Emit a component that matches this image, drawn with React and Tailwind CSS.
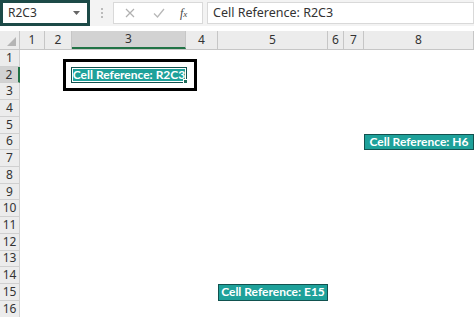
import React from "react";

const cols = [
  { n: "1", w: 25 },
  { n: "2", w: 27 },
  { n: "3", w: 114, sel: true },
  { n: "4", w: 32 },
  { n: "5", w: 110 },
  { n: "6", w: 16 },
  { n: "7", w: 20 },
  { n: "8", w: 110 },
];

const rowH = 16.73;

function Label({ text, selected }) {
  return (
    <div
      className={
        "relative flex h-full w-full items-center justify-center whitespace-nowrap bg-[#1ea19a] text-[12px] font-bold text-white border border-[#11524f] " +
        (selected ? "outline outline-1 outline-white -outline-offset-2" : "")
      }
      style={{ fontFamily: "Lato, 'Open Sans', sans-serif" }}
    >
      {text}
      {selected && (
        <div className="absolute -right-[2px] -bottom-[2px] h-[5px] w-[5px] bg-[#1d6b58] border border-white" />
      )}
    </div>
  );
}

export default function App() {
  const rows = Array.from({ length: 16 }, (_, i) => i + 1);
  return (
    <div
      className="h-[317px] w-[474px] overflow-hidden bg-white"
      style={{ fontFamily: "'Noto Sans', 'Open Sans', sans-serif" }}
    >
      {/* top bar */}
      <div className="flex h-[26px] items-stretch bg-[#f3f3f3]">
        <div className="flex w-[90px] items-center justify-between border-[3px] border-[#1c4a47] bg-white pl-[5px] pr-[7px] text-[12px] text-[#333]">
          <span>R2C3</span>
          <svg width="7" height="4" viewBox="0 0 7 4">
            <path d="M0 0h7L3.5 4z" fill="#666" />
          </svg>
        </div>
        <div className="flex w-[23px] items-center justify-center">
          <div className="flex flex-col gap-[2px]">
            <div className="h-[2px] w-[2px] bg-[#bbb]" />
            <div className="h-[2px] w-[2px] bg-[#bbb]" />
            <div className="h-[2px] w-[2px] bg-[#bbb]" />
          </div>
        </div>
        <div className="my-[2px] flex w-[90px] items-center border border-[#d9d9d9] bg-white">
          <svg className="ml-[11px]" width="10" height="10" viewBox="0 0 10 10">
            <path d="M1 1l8 8M9 1l-8 8" stroke="#b0b0b0" strokeWidth="1.2" />
          </svg>
          <svg className="ml-[18px]" width="12" height="10" viewBox="0 0 12 10">
            <path d="M1 5.5l3.5 3.5L11 1" stroke="#b8b8b8" strokeWidth="1.3" fill="none" />
          </svg>
          <span
            className="ml-[15px] text-[12px] italic text-[#444]"
            style={{ fontFamily: "'Liberation Serif', serif" }}
          >
            f<span className="text-[9px]">x</span>
          </span>
        </div>
        <div className="w-[4px]" />
        <div className="my-[2px] flex flex-1 items-center border border-[#d9d9d9] bg-white pl-[5px] text-[12.5px] text-[#333]">
          Cell Reference: R2C3
        </div>
      </div>
      <div className="h-[5px] bg-white" />
      {/* column header */}
      <div className="flex h-[19px] border-b border-[#c6c6c6] bg-[#ececec]">
        <div className="relative w-[20px] border-r border-[#c6c6c6]">
          <svg className="absolute bottom-[3px] right-[3px]" width="9" height="9" viewBox="0 0 9 9">
            <path d="M9 0V9H0z" fill="#b5b5b5" />
          </svg>
        </div>
        {cols.map((c) => (
          <div
            key={c.n}
            className={
              "flex items-center justify-center border-r border-[#c6c6c6] text-[12px] text-[#333] " +
              (c.sel ? "border-b-2 border-b-[#217346] bg-[#d2d2d2]" : "")
            }
            style={{ width: c.w }}
          >
            {c.n}
          </div>
        ))}
      </div>
      {/* rows */}
      <div className="flex">
        <div className="w-[20px] bg-[#ececec]">
          {rows.map((r) => (
            <div
              key={r}
              className={
                "flex items-center justify-center border-b border-r border-[#d0d0d0] text-[12px] text-[#333] " +
                (r === 2 ? "border-r-2 border-r-[#217346] bg-[#d2d2d2]" : "")
              }
              style={{ height: rowH }}
            >
              {r}
            </div>
          ))}
        </div>
        <div className="flex flex-1">
          {cols.map((c) => (
            <div key={c.n} style={{ width: c.w }} className="flex flex-col">
              {rows.map((r) => {
                let content = null;
                if (c.n === "3" && r === 2)
                  content = (
                    <div className="relative h-full w-full">
                      <div className="pointer-events-none absolute -left-[9px] -right-[11px] -top-[8px] -bottom-[8px] border-[3px] border-black" />
                      <div className="absolute inset-x-[-1px] inset-y-[0px]">
                        <Label text="Cell Reference: R2C3" selected />
                      </div>
                    </div>
                  );
                if (c.n === "8" && r === 6)
                  content = <Label text="Cell Reference: H6" />;
                if (c.n === "5" && r === 15)
                  content = <Label text="Cell Reference: E15" />;
                return (
                  <div key={r} style={{ height: rowH }}>
                    {content}
                  </div>
                );
              })}
            </div>
          ))}
        </div>
      </div>
    </div>
  );
}
